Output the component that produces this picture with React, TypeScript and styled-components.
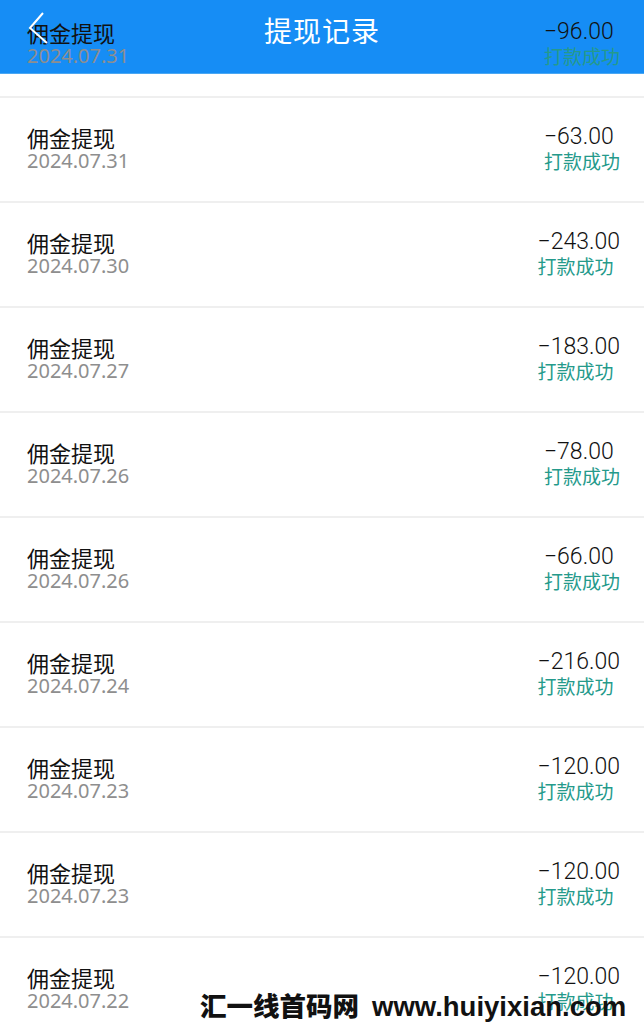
import React from "react";
import styled, { createGlobalStyle } from "styled-components";

const Global = createGlobalStyle`
  html, body { margin: 0; padding: 0; background: #ffffff; }
  body { font-family: "Noto Sans CJK SC", "Noto Sans", sans-serif; overflow: hidden; }
`;

const Page = styled.div`
  position: relative;
  width: 644px;
  height: 1030px;
  overflow: hidden;
  background: #ffffff;
`;

const Header = styled.header`
  position: absolute;
  top: 0;
  left: 0;
  right: 0;
  height: 73px;
  background: #168df5;
  border-bottom: 1px solid #4aa7f3;
  display: flex;
  align-items: center;
  justify-content: center;
  z-index: 0;
`;

const Back = styled.button`
  position: absolute;
  left: 26px;
  top: 10px;
  width: 24px;
  height: 38px;
  padding: 0;
  border: 0;
  background: transparent;
  z-index: 3;
  display: block;
`;

const Title = styled.h1`
  margin: 0;
  margin-top: -14px;
  font-size: 28px;
  font-weight: 400;
  color: #ffffff;
  letter-spacing: 1px;
`;

const List = styled.div`
  position: relative;
  z-index: 1;
  margin-top: -7px;
`;

const Row = styled.div`
  display: flex;
  justify-content: space-between;
  padding: 27px 24px 0 27px;
  box-sizing: border-box;
  height: 105px;
  border-bottom: 2px solid #efefef;
`;

const Col = styled.div`
  display: flex;
  flex-direction: column;
  align-items: flex-start;
`;

const Name = styled.div`
  font-size: 22px;
  line-height: 24px;
  color: #111111;
`;

const DateText = styled.div`
  font-size: 20px;
  line-height: 24px;
  color: #8e8e8e;
  font-family: "Noto Sans", "Noto Sans CJK SC", sans-serif;
`;

const Amount = styled.div`
  font-size: 23px;
  line-height: 24px;
  color: #111111;
  font-family: Roboto, "Noto Sans", sans-serif;
  font-weight: 300;
`;

const Status = styled.div`
  font-size: 19px;
  line-height: 24px;
  color: #259a8b;
`;

const Watermark = styled.div`
  position: absolute;
  left: 200px;
  bottom: 6px;
  z-index: 2;
  font-size: 26.5px;
  font-weight: 900;
  color: #111111;
  white-space: nowrap;
  display: flex;
  gap: 13px;
  align-items: baseline;
`;

const WmLatin = styled.span`
  font-family: "Liberation Sans", Arial, sans-serif;
  font-weight: 700;
  font-size: 27.5px;
`;

const rows = [
  ["2024.07.31", "−96.00"],
  ["2024.07.31", "−63.00"],
  ["2024.07.30", "−243.00"],
  ["2024.07.27", "−183.00"],
  ["2024.07.26", "−78.00"],
  ["2024.07.26", "−66.00"],
  ["2024.07.24", "−216.00"],
  ["2024.07.23", "−120.00"],
  ["2024.07.23", "−120.00"],
  ["2024.07.22", "−120.00"],
];

export default function App() {
  return (
    <Page>
      <Global />
      <Header>
        <Title>提现记录</Title>
      </Header>
      <Back aria-label="返回">
        <svg width="24" height="38" viewBox="0 0 24 38" style={{ display: "block" }}>
          <polyline points="17,3 4,18 21,33" fill="none" stroke="#ffffff" strokeWidth="2" />
        </svg>
      </Back>
      <List>
        {rows.map(([d, a], i) => (
          <Row key={i}>
            <Col>
              <Name>佣金提现</Name>
              <DateText>{d}</DateText>
            </Col>
            <Col>
              <Amount>{a}</Amount>
              <Status>打款成功</Status>
            </Col>
          </Row>
        ))}
      </List>
      <Watermark>
        <span>汇一线首码网</span>
        <WmLatin>www.huiyixian.com</WmLatin>
      </Watermark>
    </Page>
  );
}
